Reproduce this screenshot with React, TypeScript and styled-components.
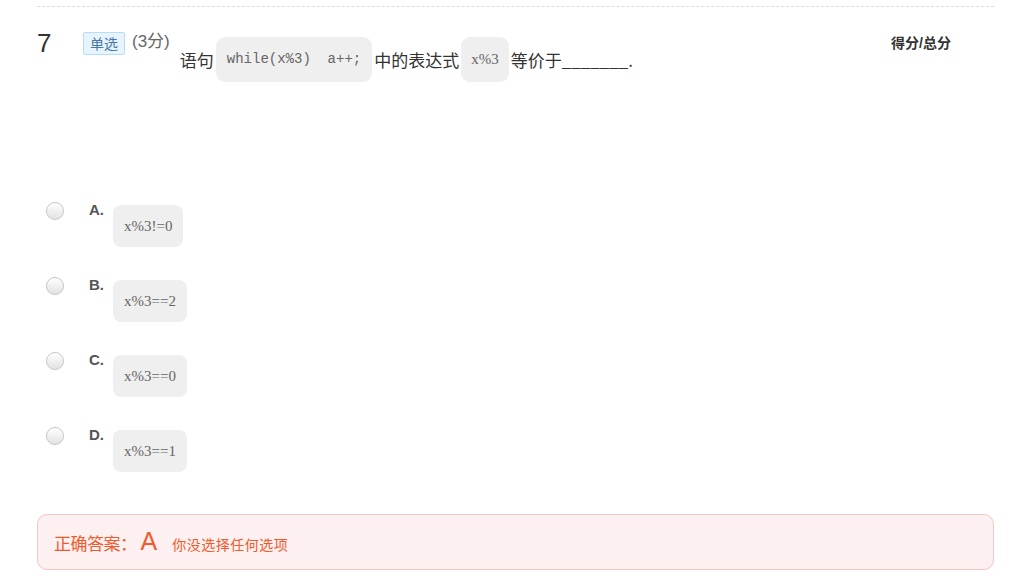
import React from "react";
import styled, { createGlobalStyle } from "styled-components";

const Global = createGlobalStyle`
  html, body { margin: 0; padding: 0; background: #fff; }
  body { font-family: "Liberation Sans", "Noto Sans CJK SC", sans-serif; color: #333; }
`;

const Page = styled.div`
  width: 1024px;
  height: 588px;
  box-sizing: border-box;
  padding: 6px 30px 0 37px;
  overflow: hidden;
`;

const Card = styled.div`
  border-top: 1px dashed #dcdcdc;
  padding-top: 21px;
`;

const Header = styled.div`
  display: flex;
  align-items: flex-start;
`;

const Num = styled.div`
  width: 46px;
  font-size: 26px;
  line-height: 30px;
  color: #333;
  font-family: "Liberation Sans", sans-serif;
`;

const Tag = styled.span`
  margin-top: 4px;
  height: 21px;
  padding: 0 6px;
  line-height: 21px;
  font-size: 14px;
  color: #4a77a5;
  background: #e6f4fe;
  border: 1px solid #b9dcf5;
  border-radius: 2px;
  font-family: "Noto Sans CJK SC", sans-serif;
`;

const Points = styled.span`
  margin-left: 7px;
  margin-top: 3px;
  font-size: 17px;
  line-height: 22px;
  color: #666;
  font-family: "Liberation Sans", "Noto Sans CJK SC", sans-serif;
`;

const Question = styled.div`
  margin-left: 10px;
  margin-top: 9px;
  font-size: 17px;
  color: #333;
  line-height: 45px;
  font-family: "Noto Sans CJK SC", sans-serif;
  display: flex;
  align-items: center;
`;

const Code = styled.span<{ $mono?: boolean }>`
  display: inline-block;
  margin: 0 2px;
  padding: 0 ${(p) => (p.$mono ? "11px" : "10px")};
  height: 45px;
  line-height: 45px;
  background: #efefef;
  border-radius: 9px;
  color: #666;
  font-size: ${(p) => (p.$mono ? "14px" : "15px")};
  font-family: ${(p) =>
    p.$mono ? '"Liberation Mono", monospace' : '"Liberation Serif", serif'};
  white-space: pre;
`;

const Score = styled.div`
  margin-left: auto;
  margin-right: 43px;
  margin-top: 5px;
  font-size: 14px;
  font-weight: bold;
  color: #333;
  line-height: 20px;
  font-family: "Liberation Sans", "Noto Sans CJK SC", sans-serif;
`;

const Options = styled.div`
  margin-top: 120px;
  display: flex;
  flex-direction: column;
  gap: 30px;
`;

const Row = styled.div`
  display: flex;
  align-items: flex-start;
  height: 45px;
`;

const Radio = styled.span`
  margin-left: 9px;
  width: 16px;
  height: 16px;
  border-radius: 50%;
  border: 1px solid #c8c8c8;
  background: linear-gradient(#ffffff, #e2e2e2);
  box-shadow: inset 0 1px 1px rgba(255, 255, 255, 0.8), 0 0 1px rgba(0, 0, 0, 0.1);
`;

const Letter = styled.span`
  margin-left: 25px;
  margin-top: -1px;
  width: 24px;
  font-size: 15px;
  font-weight: bold;
  color: #555;
  line-height: 18px;
  font-family: "Liberation Sans", sans-serif;
`;

const OptBox = styled.span`
  margin-top: 3px;
  padding: 0 11px;
  height: 42px;
  line-height: 42px;
  background: #efefef;
  border-radius: 8px;
  color: #666;
  font-size: 15px;
  font-family: "Liberation Serif", serif;
  white-space: pre;
`;

const Answer = styled.div`
  margin-top: 42px;
  height: 56px;
  box-sizing: border-box;
  border: 1px solid #f7c4c4;
  background: #fdf0f0;
  border-radius: 10px;
  padding: 0 16px;
  display: flex;
  align-items: baseline;
  padding-top: 12px;
  color: #f05a2c;
  font-family: "Noto Sans CJK SC", sans-serif;
`;

const AnsLabel = styled.span`
  font-size: 17px;
  letter-spacing: -0.5px;
`;

const AnsLetter = styled.span`
  font-size: 25px;
  margin-left: 4px;
  font-family: "Liberation Sans", sans-serif;
`;

const AnsNote = styled.span`
  font-size: 14px;
  letter-spacing: 0.5px;
  margin-left: 15px;
`;

const opts = [
  ["A.", "x%3!=0"],
  ["B.", "x%3==2"],
  ["C.", "x%3==0"],
  ["D.", "x%3==1"],
];

export default function App() {
  return (
    <Page>
      <Global />
      <Card>
        <Header>
          <Num>7</Num>
          <Tag>单选</Tag>
          <Points>(3分)</Points>
          <Question>
            语句<Code $mono>{"while(x%3)  a++;"}</Code>中的表达式<Code>x%3</Code>等价于_______.
          </Question>
          <Score>得分/总分</Score>
        </Header>
        <Options>
          {opts.map(([l, t]) => (
            <Row key={l}>
              <Radio />
              <Letter>{l}</Letter>
              <OptBox>{t}</OptBox>
            </Row>
          ))}
        </Options>
        <Answer>
          <AnsLabel>正确答案：</AnsLabel>
          <AnsLetter>A</AnsLetter>
          <AnsNote>你没选择任何选项</AnsNote>
        </Answer>
      </Card>
    </Page>
  );
}
